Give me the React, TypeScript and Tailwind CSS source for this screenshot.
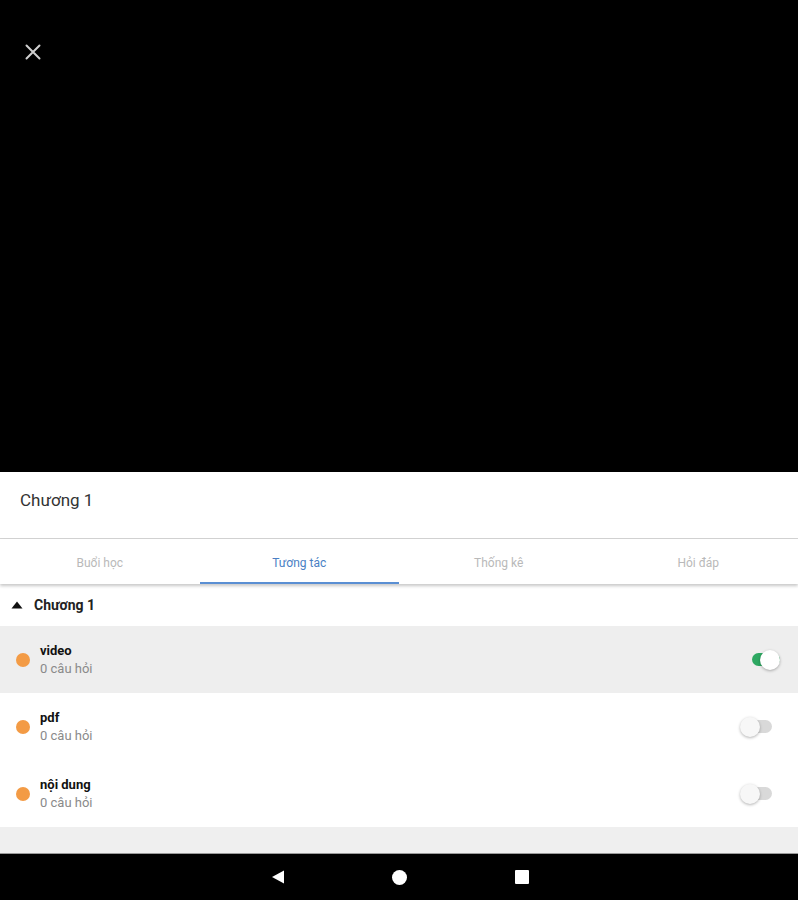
import React from "react";

function Toggle({ on }: { on: boolean }) {
  return (
    <div className={`relative w-[32px] h-[20px] flex items-center ${on ? "" : "mr-[8px]"}`}>
      <div className={`w-[28px] h-[13px] rounded-full ml-[4px] ${on ? "bg-[#2ea862]" : "bg-[#d9d9d9]"}`} />
      <div
        className={`absolute top-0 w-[20px] h-[20px] rounded-full ${on ? "left-[12px] bg-white" : "left-0 bg-[#f7f7f7]"} shadow-[0_1px_3px_rgba(0,0,0,0.3)]`}
      />
    </div>
  );
}

function Row({ title, on, active }: { title: string; on: boolean; active?: boolean }) {
  return (
    <div className={`h-[67px] flex items-center pl-[16px] pr-[18px] ${active ? "bg-[#eeeeee]" : "bg-white"}`}>
      <div className="w-[14px] h-[14px] rounded-full bg-[#f39b45]" />
      <div className="ml-[10px] flex-1 flex flex-col leading-[18px]">
        <span className="text-[13px] font-bold text-[#111]">{title}</span>
        <span className="text-[13px] text-[#8a8a8a]">0 câu hỏi</span>
      </div>
      <Toggle on={on} />
    </div>
  );
}

export default function App() {
  const tabs = ["Buổi học", "Tương tác", "Thống kê", "Hỏi đáp"];
  return (
    <div className="w-[798px] h-[900px] flex flex-col bg-black" style={{ fontFamily: "Roboto, 'Noto Sans', sans-serif" }}>
      <div className="h-[472px] bg-black relative">
        <svg className="absolute left-[25px] top-[44px]" width="16" height="16" viewBox="0 0 16 16">
          <path d="M1.5 1.5 L14.5 14.5 M14.5 1.5 L1.5 14.5" stroke="#cfcfcf" strokeWidth="2" strokeLinecap="round" />
        </svg>
      </div>
      <div className="h-[67px] bg-white flex items-center pl-[20px] border-b border-[#d4d4d4]">
        <span className="text-[17px] text-[#333] pb-[8px]">Chương 1</span>
      </div>
      <div className="h-[45px] bg-white flex relative z-10 shadow-[0_2px_3px_rgba(0,0,0,0.22)]">
        {tabs.map((t, i) => (
          <div key={t} className="flex-1 relative flex items-center justify-center">
            <span className={`text-[12px] pt-[2px] ${i === 1 ? "text-[#4a7fc4]" : "text-[#b9b9b9]"}`}>{t}</span>
            {i === 1 && <div className="absolute left-0 right-0 bottom-0 h-[2px] bg-[#5a8fd3]" />}
          </div>
        ))}
      </div>
      <div className="h-[42px] bg-white flex items-center pl-[11px]">
        <svg width="12" height="8" viewBox="0 0 12 8">
          <path d="M6 0.5 L11.5 7.5 L0.5 7.5 Z" fill="#111" />
        </svg>
        <span className="ml-[11px] text-[14px] font-bold text-[#222]">Chương 1</span>
      </div>
      <Row title="video" on active />
      <Row title="pdf" on={false} />
      <Row title="nội dung" on={false} />
      <div className="h-[27px] bg-[#efefef] border-b border-[#9a9a9a]" />
      <div className="flex-1 bg-black flex items-center justify-center">
        <div className="w-[258px] flex items-center justify-between ml-[1px]">
          <svg width="14" height="14" viewBox="0 0 14 14">
            <path d="M13 0.5 L13 13.5 L1 7 Z" fill="#fff" />
          </svg>
          <div className="w-[15px] h-[15px] rounded-full bg-white" />
          <div className="w-[14px] h-[14px] rounded-[1px] bg-white" />
        </div>
      </div>
    </div>
  );
}
